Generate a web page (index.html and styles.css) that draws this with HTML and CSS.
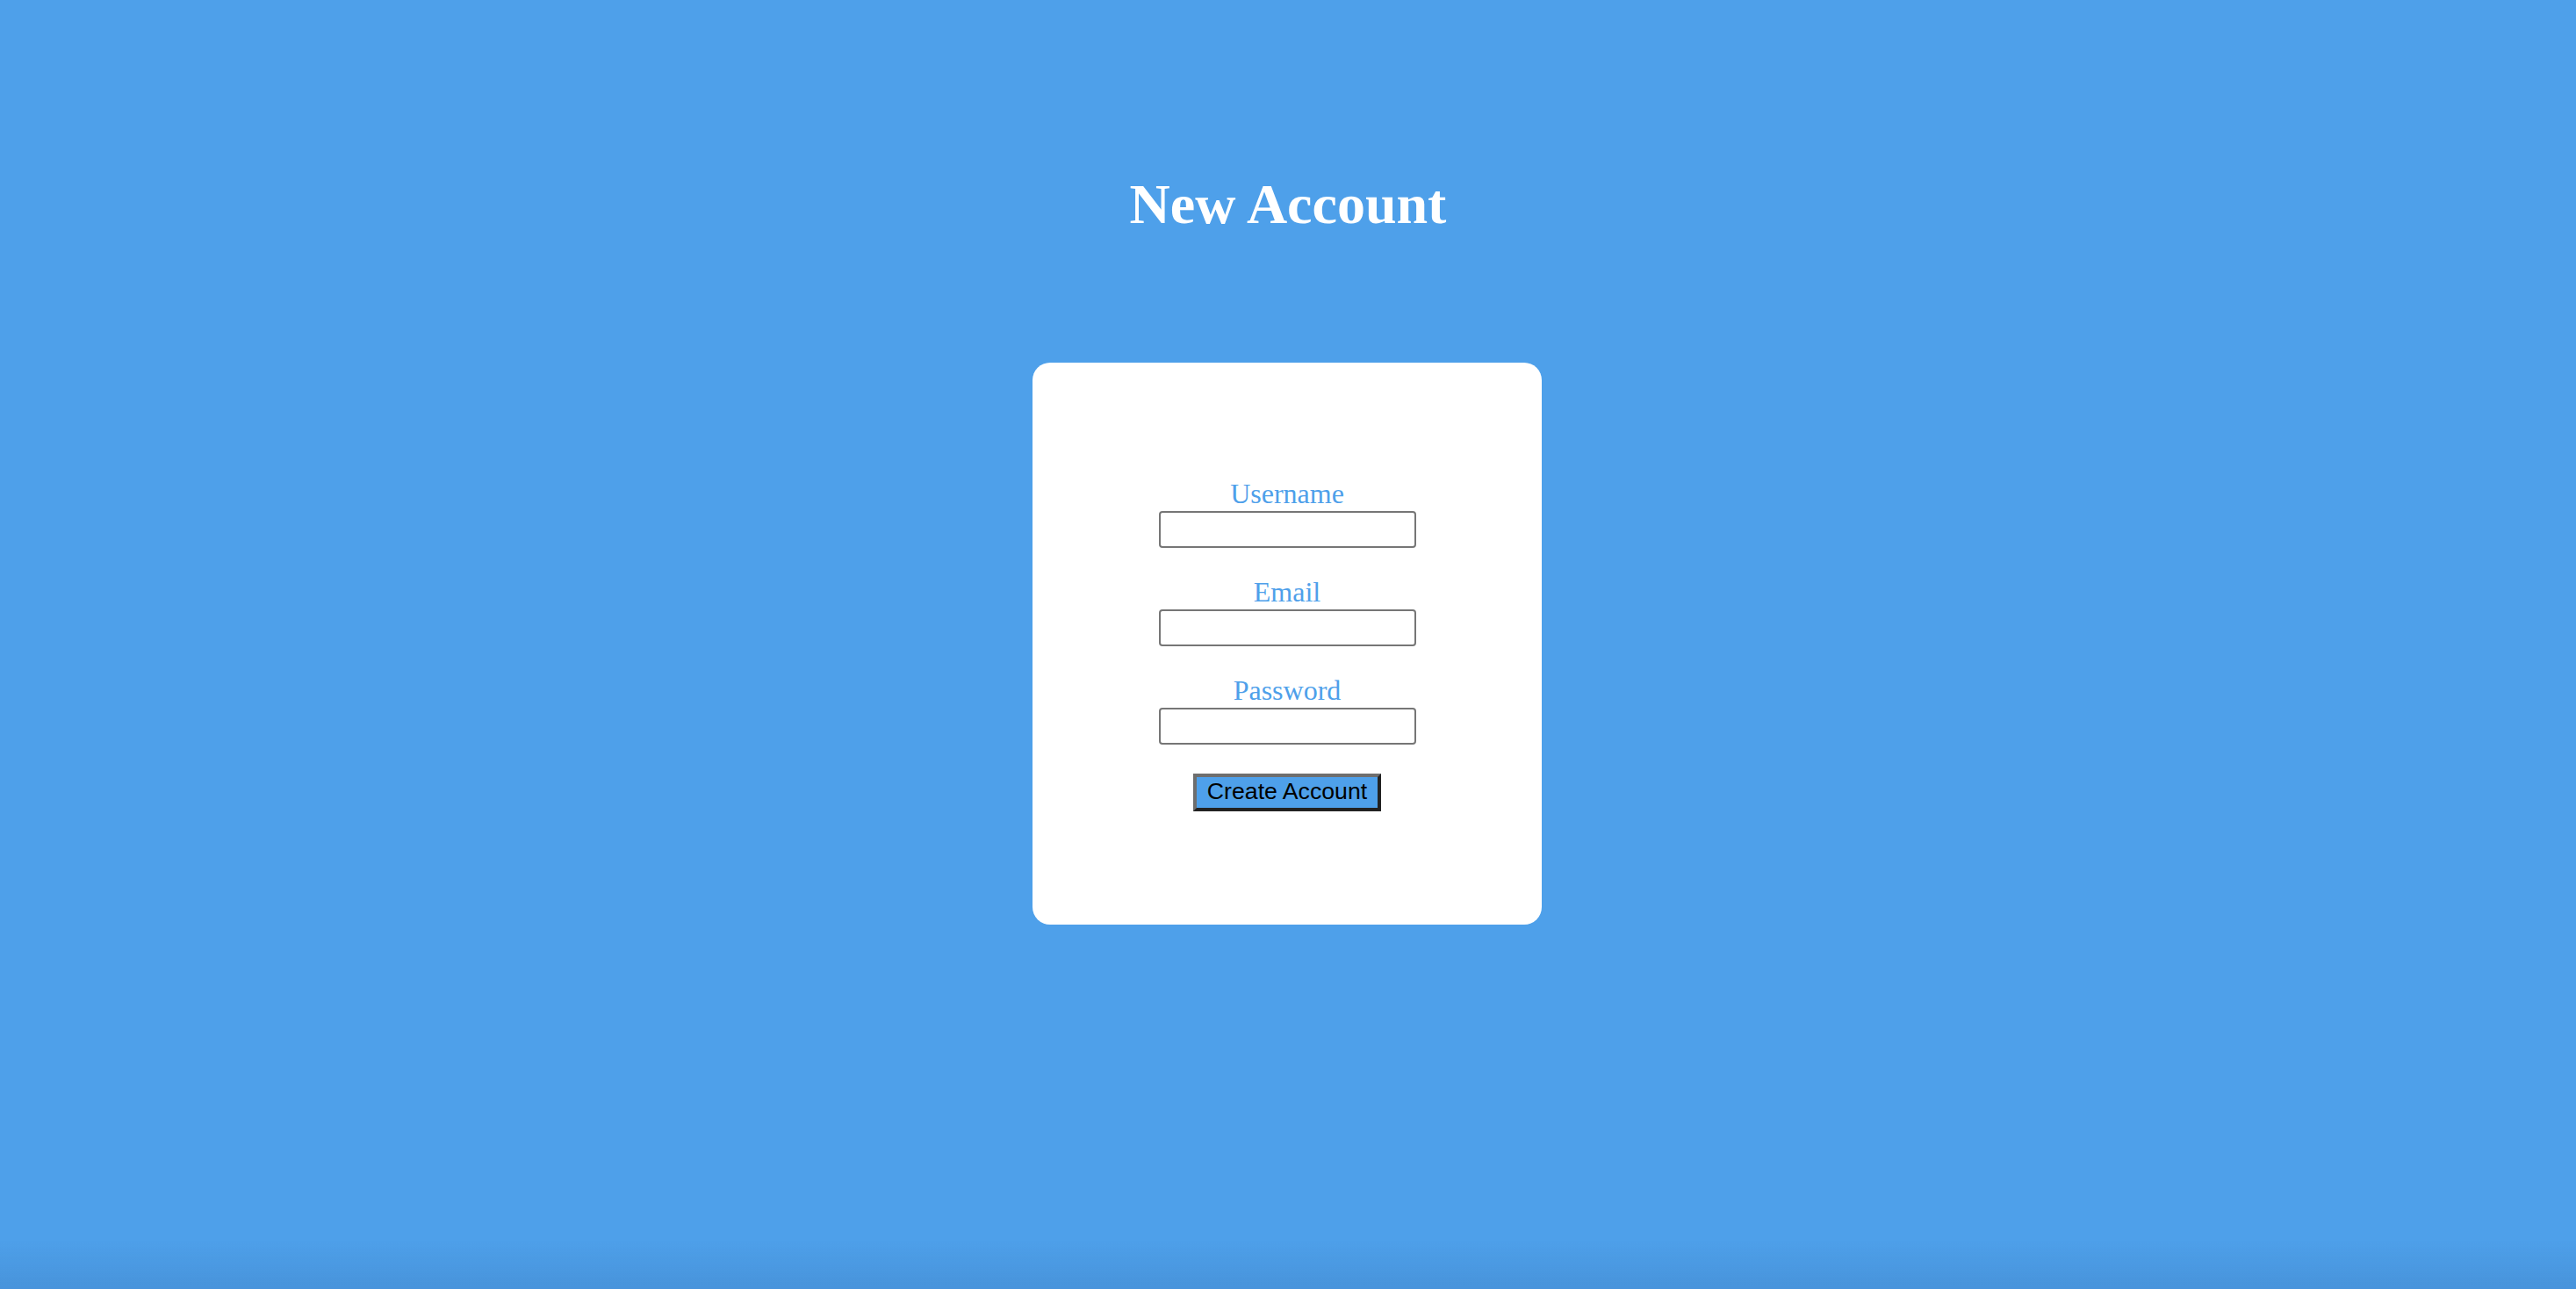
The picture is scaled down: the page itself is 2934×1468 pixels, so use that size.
FILE: index.html
```html
<!DOCTYPE html>
<html lang="en">
<head>
<meta charset="utf-8">
<title>New Account</title>
<link rel="stylesheet" href="styles.css">
</head>
<body>
<main class="page">
  <h1 class="title">New Account</h1>
  <form class="card">
    <div class="field">
      <label class="label" for="username">Username</label>
      <input class="input" id="username" type="text">
    </div>
    <div class="field">
      <label class="label" for="email">Email</label>
      <input class="input" id="email" type="email">
    </div>
    <div class="field">
      <label class="label" for="password">Password</label>
      <input class="input" id="password" type="password">
    </div>
    <button class="submit" type="button">Create Account</button>
  </form>
</main>
<div class="edge-shade"></div>
</body>
</html>
```

FILE: styles.css
```css
html, body {
  margin: 0;
  padding: 0;
  height: 100%;
}

body {
  background: #4ea0ea;
  font-family: "Liberation Serif", "Times New Roman", serif;
  overflow: hidden;
}

.page {
  display: flex;
  flex-direction: column;
  align-items: center;
  padding-top: 196px;
}

.title {
  margin: 0;
  color: #ffffff;
  font-size: 64px;
  font-weight: bold;
  line-height: 74px;
  text-align: center;
}

.card {
  box-sizing: border-box;
  width: 580px;
  height: 640px;
  margin-top: 143px;
  margin-right: 2px;
  padding-top: 131px;
  background: #ffffff;
  border-radius: 20px;
  display: flex;
  flex-direction: column;
  align-items: center;
  gap: 32px;
}

.field {
  display: flex;
  flex-direction: column;
  align-items: center;
  gap: 1px;
}

.label {
  color: #4ea0ea;
  font-size: 32px;
  line-height: 37px;
}

.input {
  box-sizing: border-box;
  width: 293px;
  height: 42px;
  margin: 0;
  border: 2px solid #767676;
  border-radius: 4px;
  background: #ffffff;
  font-size: 26px;
  padding: 0 4px;
}

.submit {
  box-sizing: border-box;
  width: 214px;
  height: 43px;
  margin-top: 1px;
  padding: 1px 0 4px;
  border-width: 4px;
  border-style: solid;
  border-color: #6e6e6e #222222 #222222 #6e6e6e;
  background: #4ea0ea;
  color: #000000;
  font-family: "Liberation Sans", Arial, sans-serif;
  font-size: 26.67px;
  line-height: 30px;
  text-align: center;
}

.edge-shade {
  position: fixed;
  left: 0;
  right: 0;
  bottom: 0;
  height: 56px;
  pointer-events: none;
  background: linear-gradient(to bottom, rgba(20, 40, 90, 0), rgba(20, 40, 90, 0.1));
}
```
